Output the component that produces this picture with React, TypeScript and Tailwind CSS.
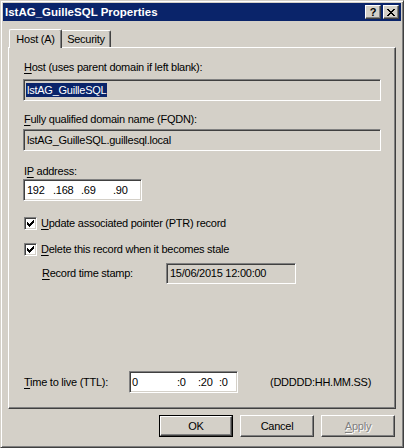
import React from "react";

const font = "font-['Liberation_Sans',Arial,sans-serif] text-[11px] tracking-[-0.25px] leading-[13px] text-black";
const raised =
  "border border-t-white border-l-white border-r-[#404040] border-b-[#404040] shadow-[inset_-1px_-1px_0_#808080] bg-[#d4d0c8]";
const sunken =
  "border border-t-[#808080] border-l-[#808080] border-r-white border-b-white shadow-[inset_1px_1px_0_#404040,inset_-1px_-1px_0_#d4d0c8]";

function Key({ k }: { k: string }) {
  return <span className="underline underline-offset-[2px]">{k}</span>;
}

function Check({ children }: { children: React.ReactNode }) {
  return (
    <div className="flex items-center h-[13px] ml-[1px]">
      <div className={`w-[13px] h-[13px] bg-white ${sunken} flex items-center justify-center`}>
        <svg width="9" height="9" viewBox="0 0 9 9" shapeRendering="crispEdges">
          <path d="M1 3h1v3h-1zM2 4h1v3h-1zM3 5h1v3h-1zM4 4h1v3h-1zM5 3h1v3h-1zM6 2h1v3h-1zM7 1h1v3h-1z" fill="#000" />
        </svg>
      </div>
      <span className="ml-[4px]">{children}</span>
    </div>
  );
}

export default function App() {
  return (
    <div
      className={`w-[404px] h-[448px] bg-[#d4d0c8] border border-t-[#d4d0c8] border-l-[#d4d0c8] border-r-[#404040] border-b-[#404040] shadow-[inset_1px_1px_0_#fff,inset_-1px_-1px_0_#808080] p-[2px] flex flex-col ${font}`}
    >
      {/* title bar */}
      <div className="h-[18px] bg-[#0a246a] flex items-center pl-[2px] pr-[2px]">
        <span className="text-white font-bold text-[11.5px] tracking-normal">lstAG_GuilleSQL Properties</span>
        <div className="ml-auto flex gap-[2px]">
          <div className={`w-[16px] h-[14px] ${raised} flex items-center justify-center font-bold text-[11px] leading-none tracking-normal`}>?</div>
          <div className={`w-[16px] h-[14px] ${raised} flex items-center justify-center`}>
            <svg width="8" height="7" viewBox="0 0 8 7" shapeRendering="crispEdges">
              <path d="M0 0h2v1h-2zM6 0h2v1h-2zM1 1h2v1h-2zM5 1h2v1h-2zM2 2h4v1h-4zM3 3h2v1h-2zM2 4h4v1h-4zM1 5h2v1h-2zM5 5h2v1h-2zM0 6h2v1h-2zM6 6h2v1h-2z" fill="#000" />
            </svg>
          </div>
        </div>
      </div>

      <div className="px-[5px] flex flex-col">
        {/* tabs */}
        <div className="flex items-end mt-[8px] pl-[1px] h-[19px] relative z-10 -mb-[1px]">
          <div className="w-[53px] h-[19px] bg-[#d4d0c8] border-t border-l border-r border-t-white border-l-white border-r-[#404040] rounded-t-[2px] shadow-[inset_-1px_0_0_#808080] flex justify-center pt-[3px]">
            Host (A)
          </div>
          <div className="w-[49px] h-[17px] mb-[1px] border-t border-r border-t-white border-r-[#404040] rounded-tr-[2px] shadow-[inset_-1px_0_0_#808080] flex justify-center pt-[2px]">
            Security
          </div>
        </div>

        {/* panel */}
        <div className="h-[362px] border border-t-white border-l-white border-r-[#404040] border-b-[#404040] shadow-[inset_-1px_-1px_0_#808080] flex flex-col px-[14px]">
          <div className="mt-[13px] pl-[1px]">
            <Key k="H" />ost (uses parent domain if left blank):
          </div>
          <div className={`mt-[5px] h-[22px] w-[358px] ${sunken} flex items-center pl-[2px]`}>
            <span className="bg-[#0a246a] text-white px-[1px] leading-[14px]">lstAG_GuilleSQL</span>
          </div>

          <div className="mt-[12px] pl-[1px]">
            <Key k="F" />ully qualified domain name (FQDN):
          </div>
          <div className={`mt-[3px] h-[22px] w-[358px] ${sunken} flex items-center pl-[3px]`}>
            lstAG_GuilleSQL.guillesql.local
          </div>

          <div className="mt-[14px] pl-[1px]">
            I<Key k="P" /> address:
          </div>
          <div className={`mt-[1px] h-[22px] w-[119px] bg-white ${sunken} flex items-center pl-[3px]`}>
            <span className="w-[26px]">192</span>
            <span className="w-[28px]">.168</span>
            <span className="w-[32px]">.69</span>
            <span>.90</span>
          </div>

          <div className="mt-[16px]">
            <Check>
              <Key k="U" />pdate associated pointer (PTR) record
            </Check>
          </div>
          <div className="mt-[13px]">
            <Check>
              <Key k="D" />elete this record when it becomes stale
            </Check>
          </div>

          <div className="mt-[7px] flex items-center pl-[19px]">
            <span className="w-[124px]">
              <Key k="R" />ecord time stamp:
            </span>
            <div className={`h-[21px] w-[130px] ${sunken} flex items-center pl-[3px]`}>15/06/2015 12:00:00</div>
          </div>

          <div className="mt-[87px] flex items-center">
            <span className="w-[106px] pl-[1px]">
              <Key k="T" />ime to live (TTL):
            </span>
            <div className={`h-[22px] w-[109px] bg-white ${sunken} flex items-center pl-[2px]`}>
              <span className="w-[45px]">0</span>
              <span className="w-[21px]">:0</span>
              <span className="w-[21px]">:20</span>
              <span>:0</span>
            </div>
            <span className="ml-[32px]">(DDDDD:HH.MM.SS)</span>
          </div>
        </div>

        {/* buttons */}
        <div className="mt-[6px] flex justify-end gap-[7px] pr-[1px]">
          <div className="w-[74px] h-[22px] border border-black">
            <div className={`h-full ${raised} flex items-center justify-center`}>OK</div>
          </div>
          <div className={`w-[74px] h-[22px] ${raised} flex items-center justify-center`}>Cancel</div>
          <div className={`w-[74px] h-[22px] ${raised} flex items-center justify-center text-[#808080] [text-shadow:1px_1px_0_#fff]`}>
            <Key k="A" />pply
          </div>
        </div>
      </div>
    </div>
  );
}
